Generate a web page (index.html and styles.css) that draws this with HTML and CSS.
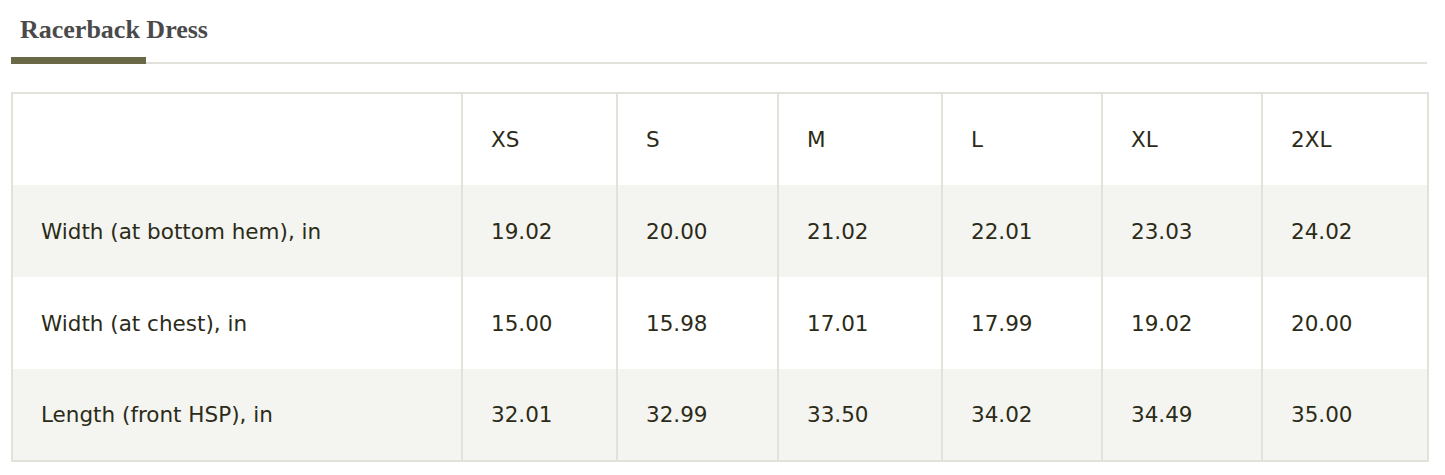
FILE: index.html
```html
<!DOCTYPE html>
<html>
<head>
<meta charset="utf-8">
<link rel="stylesheet" href="styles.css">
</head>
<body>
<div class="page">
  <div class="tabs">
    <div class="tab">Racerback Dress</div>
  </div>
  <table class="sizes">
    <colgroup>
      <col class="c-label"><col class="c1"><col class="c2"><col class="c3"><col class="c4"><col class="c5"><col class="c6">
    </colgroup>
    <tr class="head">
      <td></td><td>XS</td><td>S</td><td>M</td><td>L</td><td>XL</td><td>2XL</td>
    </tr>
    <tr class="alt">
      <td>Width (at bottom hem), in</td><td>19.02</td><td>20.00</td><td>21.02</td><td>22.01</td><td>23.03</td><td>24.02</td>
    </tr>
    <tr>
      <td>Width (at chest), in</td><td>15.00</td><td>15.98</td><td>17.01</td><td>17.99</td><td>19.02</td><td>20.00</td>
    </tr>
    <tr class="alt">
      <td>Length (front HSP), in</td><td>32.01</td><td>32.99</td><td>33.50</td><td>34.02</td><td>34.49</td><td>35.00</td>
    </tr>
  </table>
</div>
</body>
</html>
```
FILE: styles.css
```css
html, body { margin: 0; padding: 0; background: #fff; }
.page { padding: 0 18px 0 11px; }
.tabs {
  display: flex;
  border-bottom: 2px solid #e2e2da;
  height: 64px;
  box-sizing: border-box;
}
.tab {
  font-family: "Liberation Serif", serif;
  font-weight: bold;
  font-size: 26px;
  line-height: 30px;
  color: #4a4a4a;
  width: 135px;
  padding: 15px 0 0 9px;
  box-sizing: border-box;
  border-bottom: 7px solid #6a6947;
  margin-bottom: -2px;
  white-space: nowrap;
}
.sizes {
  margin-top: 28px;
  width: 1416px;
  border-collapse: collapse;
  border: 2px solid #e2e2da;
  font-family: "DejaVu Sans", sans-serif;
  font-size: 21.5px;
  color: #2b2b18;
  table-layout: fixed;
}
.c-label { width: 450px; }
.c1 { width: 155px; }
.c2 { width: 161px; }
.c3 { width: 164px; }
.c4 { width: 160px; }
.c5 { width: 160px; }
.c6 { width: 166px; }
.sizes td {
  height: 92px;
  padding: 0 0 0 28px;
  box-sizing: border-box;
  border-left: 2px solid #e2e2da;
  vertical-align: middle;
}
.sizes tr.alt td { background: #f4f4f0; }
```
